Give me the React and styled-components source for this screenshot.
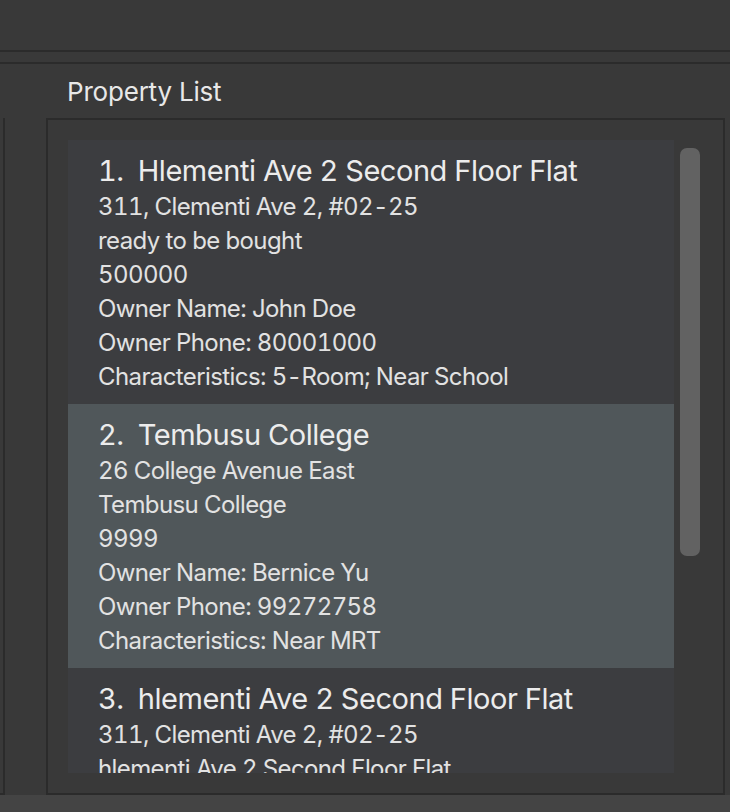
import styled, { createGlobalStyle } from "styled-components"

const properties = [
  {
    id: 1,
    name: "Hlementi Ave 2 Second Floor Flat",
    address: "311, Clementi Ave 2, #02-25",
    description: "ready to be bought",
    price: "500000",
    owner: "John Doe",
    phone: "80001000",
    characteristics: "5-Room; Near School",
  },
  {
    id: 2,
    name: "Tembusu College",
    address: "26 College Avenue East",
    description: "Tembusu College",
    price: "9999",
    owner: "Bernice Yu",
    phone: "99272758",
    characteristics: "Near MRT",
    selected: true,
  },
  {
    id: 3,
    name: "hlementi Ave 2 Second Floor Flat",
    address: "311, Clementi Ave 2, #02-25",
    description: "hlementi Ave 2 Second Floor Flat",
    price: "500000",
    owner: "John Doe",
    phone: "80001000",
    characteristics: "5-Room; Near School",
  },
]

const App = () => {
  return (
    <Window>
      <GlobalStyle />
      <MenuBar />
      <CommandStrip />
      <Main>
        <SidePane>
          <SideBox />
        </SidePane>
        <ListPane>
          <PaneTitle>Property List</PaneTitle>
          <ListBox>
            <Cells>
              {properties.map((p) => (
                <Cell key={p.id} $selected={p.selected}>
                  <CardTitle>
                    <span>{p.id}.</span>
                    <span>{p.name}</span>
                  </CardTitle>
                  <Detail>{p.address}</Detail>
                  <Detail>{p.description}</Detail>
                  <Detail>{p.price}</Detail>
                  <Detail>Owner Name: {p.owner}</Detail>
                  <Detail>Owner Phone: {p.phone}</Detail>
                  <Detail>Characteristics: {p.characteristics}</Detail>
                </Cell>
              ))}
            </Cells>
            <ScrollTrack>
              <ScrollThumb />
            </ScrollTrack>
          </ListBox>
        </ListPane>
      </Main>
      <StatusBar />
    </Window>
  )
}
export default App

const GlobalStyle = createGlobalStyle`
  html, body {
    margin: 0;
    padding: 0;
    background: #393939;
    font-family: Inter, "Noto Sans", "Liberation Sans", sans-serif;
  }
`

const Window = styled.div`
  width: 730px;
  height: 812px;
  display: flex;
  flex-direction: column;
  overflow: hidden;
  background: #393939;
`

const MenuBar = styled.div`
  height: 50px;
  border-bottom: 2px solid #2b2b2b;
`

const CommandStrip = styled.div`
  height: 10px;
  border-bottom: 2px solid #2b2b2b;
`

const Main = styled.div`
  flex: 1;
  display: flex;
  min-height: 0;
`

const SidePane = styled.div`
  width: 46px;
  display: flex;
  flex-direction: column;
  padding-top: 54px;
`

const SideBox = styled.div`
  flex: 1;
  width: 3px;
  border-right: 2px solid #2b2b2b;
  border-bottom: 2px solid #2b2b2b;
`

const ListPane = styled.div`
  flex: 1;
  display: flex;
  flex-direction: column;
  padding-right: 5px;
  min-height: 0;
`

const PaneTitle = styled.div`
  height: 54px;
  line-height: 56px;
  padding-left: 21px;
  font-size: 26px;
  color: #e8e8e8;
  letter-spacing: -0.2px;
`

const ListBox = styled.div`
  flex: 1;
  display: flex;
  min-height: 0;
  border: 2px solid #2b2b2b;
  padding: 20px;
`

const Cells = styled.div`
  flex: 1;
  overflow: hidden;
  display: flex;
  flex-direction: column;
`

const Cell = styled.div`
  flex-shrink: 0;
  padding: 12px 0 10px 30px;
  background: ${(p) => (p.$selected ? "#50575a" : "#3c3d40")};
  font-variant-numeric: tabular-nums;
`

const CardTitle = styled.div`
  display: flex;
  gap: 14px;
  height: 38px;
  line-height: 38px;
  font-size: 29px;
  color: #ececec;
  letter-spacing: -0.45px;
  white-space: nowrap;
`

const Detail = styled.div`
  height: 34px;
  line-height: 34px;
  font-size: 24px;
  color: #e2e2e2;
  letter-spacing: -0.6px;
  white-space: nowrap;
`

const ScrollTrack = styled.div`
  width: 29px;
  padding: 8px 3px 0 6px;
  box-sizing: border-box;
`

const ScrollThumb = styled.div`
  width: 20px;
  height: 408px;
  border-radius: 7px;
  background: #626262;
`

const StatusBar = styled.div`
  height: 17px;
  background: #444444;
`
